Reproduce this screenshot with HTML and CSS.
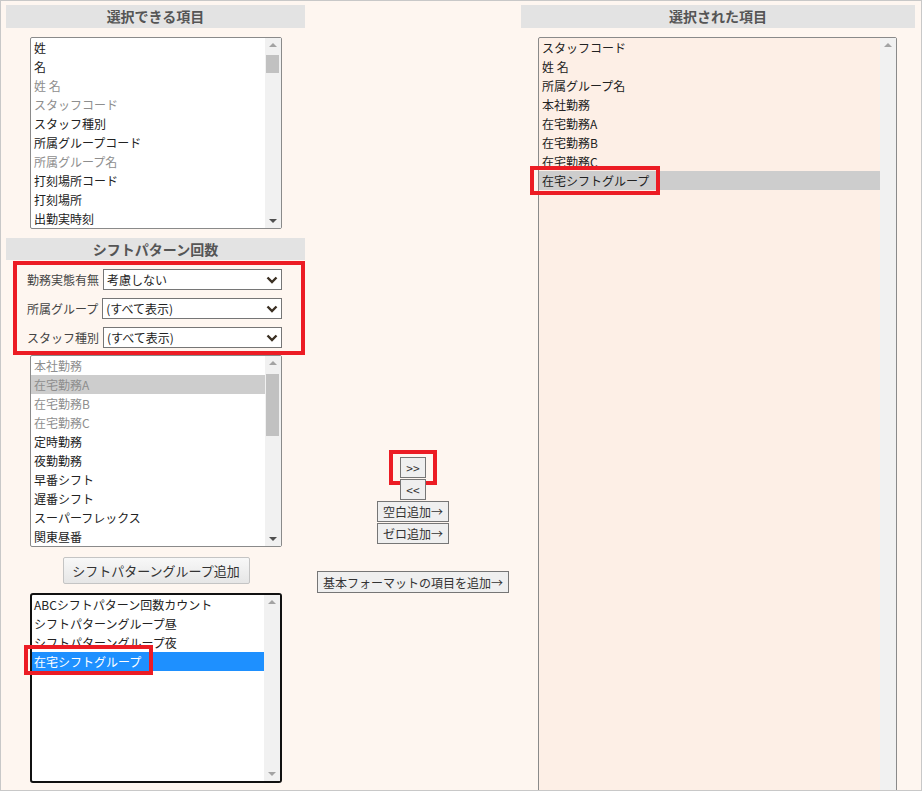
FILE: index.html
```html
<!DOCTYPE html>
<html lang="ja">
<head>
    <meta charset="UTF-8">
    <title>出力項目設定</title>
    <link rel="stylesheet" href="styles.css">
</head>
<body>
    <div class="page">
        <!-- left column -->
        <div class="col-left">
            <div class="section-title">選択できる項目</div>
            <div class="listbox list-items">
                <div class="options">
                    <div class="option">姓</div>
                    <div class="option">名</div>
                    <div class="option disabled">姓 名</div>
                    <div class="option disabled">スタッフコード</div>
                    <div class="option">スタッフ種別</div>
                    <div class="option">所属グループコード</div>
                    <div class="option disabled">所属グループ名</div>
                    <div class="option">打刻場所コード</div>
                    <div class="option">打刻場所</div>
                    <div class="option">出勤実時刻</div>
                </div>
                <div class="scrollbar">
                    <span class="arrow up"></span>
                    <span class="thumb thumb-1"></span>
                    <span class="arrow down active"></span>
                </div>
            </div>

            <div class="section-title second">シフトパターン回数</div>
            <div class="filters">
                <div class="filter-row">
                    <label>勤務実態有無</label>
                    <div class="select">
                        <select><option>考慮しない</option></select>
                        <svg width="12" height="8" viewBox="0 0 12 8"><polyline points="1.5,1.5 6,6 10.5,1.5" fill="none" stroke="#3b3023" stroke-width="2.4"/></svg>
                    </div>
                </div>
                <div class="filter-row">
                    <label>所属グループ</label>
                    <div class="select">
                        <select><option>(すべて表示)</option></select>
                        <svg width="12" height="8" viewBox="0 0 12 8"><polyline points="1.5,1.5 6,6 10.5,1.5" fill="none" stroke="#3b3023" stroke-width="2.4"/></svg>
                    </div>
                </div>
                <div class="filter-row">
                    <label>スタッフ種別</label>
                    <div class="select">
                        <select><option>(すべて表示)</option></select>
                        <svg width="12" height="8" viewBox="0 0 12 8"><polyline points="1.5,1.5 6,6 10.5,1.5" fill="none" stroke="#3b3023" stroke-width="2.4"/></svg>
                    </div>
                </div>
            </div>
            <div class="listbox list-patterns">
                <div class="options">
                    <div class="option disabled">本社勤務</div>
                    <div class="option disabled selected-gray">在宅勤務A</div>
                    <div class="option disabled">在宅勤務B</div>
                    <div class="option disabled">在宅勤務C</div>
                    <div class="option">定時勤務</div>
                    <div class="option">夜勤勤務</div>
                    <div class="option">早番シフト</div>
                    <div class="option">遅番シフト</div>
                    <div class="option">スーパーフレックス</div>
                    <div class="option">関東昼番</div>
                </div>
                <div class="scrollbar">
                    <span class="arrow up"></span>
                    <span class="thumb thumb-2"></span>
                    <span class="arrow down active"></span>
                </div>
            </div>
            <div class="add-group-wrap">
                <button class="btn-add-group">シフトパターングループ追加</button>
            </div>
            <div class="listbox list-groups">
                <div class="options">
                    <div class="option">ABCシフトパターン回数カウント</div>
                    <div class="option">シフトパターングループ昼</div>
                    <div class="option">シフトパターングループ夜</div>
                    <div class="option selected-blue"><span class="mark mark-group"></span>在宅シフトグループ</div>
                </div>
                <div class="scrollbar">
                    <span class="arrow up"></span>
                    <span class="arrow down"></span>
                </div>
            </div>
        </div>

        <!-- middle column -->
        <div class="col-middle">
            <div class="move-buttons">
                <button class="btn-small marked">&gt;&gt;<span class="mark mark-move"></span></button>
                <button class="btn-small">&lt;&lt;</button>
                <button class="btn-small">空白追加→</button>
                <button class="btn-small">ゼロ追加→</button>
            </div>
            <button class="btn-small btn-format">基本フォーマットの項目を追加→</button>
        </div>

        <!-- right column -->
        <div class="col-right">
            <div class="section-title">選択された項目</div>
            <div class="listbox list-selected">
                <div class="options">
                    <div class="option">スタッフコード</div>
                    <div class="option">姓 名</div>
                    <div class="option">所属グループ名</div>
                    <div class="option">本社勤務</div>
                    <div class="option">在宅勤務A</div>
                    <div class="option">在宅勤務B</div>
                    <div class="option">在宅勤務C</div>
                    <div class="option selected-gray"><span class="mark mark-selected"></span>在宅シフトグループ</div>
                </div>
                <div class="scrollbar">
                    <span class="arrow up"></span>
                </div>
            </div>
        </div>
    </div>
</body>
</html>
```

FILE: styles.css
```css
body {
    margin: 0;
    font-family: "Noto Sans CJK JP", "Noto Sans", sans-serif;
    font-size: 12px;
    color: #222;
}

.page {
    display: flex;
    width: 920px;
    height: 789px;
    border: 1px solid #c8c8c8;
    background-color: #fef6f0;
    overflow: hidden;
}

.col-left {
    width: 299px;
    margin-left: 5px;
    flex-shrink: 0;
}

.col-middle {
    width: 216px;
    flex-shrink: 0;
    display: flex;
    flex-direction: column;
    align-items: center;
}

.col-right {
    width: 394px;
    flex-shrink: 0;
}

.section-title {
    margin-top: 4px;
    height: 23px;
    line-height: 23px;
    background-color: #e3e3e3;
    color: #555;
    font-size: 14px;
    font-weight: bold;
    text-align: center;
}

.section-title.second {
    margin-top: 9px;
    height: 22px;
    line-height: 22px;
}

/* list boxes */
.listbox {
    position: relative;
    display: flex;
    box-sizing: border-box;
    border: 1px solid #8a8a8a;
    border-radius: 2px;
    background-color: #fff;
}

.listbox .options {
    flex: 1;
    min-width: 0;
}

.option {
    position: relative;
    height: 19px;
    line-height: 19px;
    padding-left: 3px;
    white-space: nowrap;
}

.option.disabled {
    color: #8e8e8e;
}

.option.selected-gray {
    background-color: #cdcdcd;
}

.option.selected-blue {
    background-color: #1e90ff;
    color: #fff;
}

.scrollbar {
    position: relative;
    width: 16px;
    background-color: #f1f1f1;
}

.arrow {
    position: absolute;
    left: 4px;
    width: 0;
    height: 0;
    border-left: 4px solid transparent;
    border-right: 4px solid transparent;
}

.arrow.up {
    top: 5px;
    border-bottom: 4px solid #a3a3a3;
}

.arrow.down {
    bottom: 5px;
    border-top: 4px solid #a3a3a3;
}

.arrow.down.active {
    border-top-color: #505050;
}

.thumb {
    position: absolute;
    left: 1px;
    width: 13px;
    background-color: #c1c1c1;
}

.thumb-1 {
    top: 17px;
    height: 18px;
}

.thumb-2 {
    top: 18px;
    height: 62px;
}

.list-items {
    margin: 9px 0 0 24px;
    width: 252px;
    height: 192px;
}

.list-patterns {
    margin: 0 0 0 24px;
    width: 252px;
    height: 192px;
}

.list-groups {
    margin: 9px 0 0 24px;
    width: 252px;
    height: 190px;
    border: 2px solid #111;
    border-radius: 3px;
}

.list-groups .option {
    padding-left: 2px;
}

.list-selected {
    margin: 9px 0 0 17px;
    width: 359px;
    height: 800px;
    background-color: #fdefe6;
}

/* filters in red frame */
.filters {
    position: relative;
    z-index: 1;
    margin: 1px 0 0 7px;
    width: 292px;
    box-sizing: border-box;
    border: 4px solid #ec1c24;
    padding: 4px 19px 3px 10px;
    display: flex;
    flex-direction: column;
    gap: 8px;
}

.filter-row {
    display: flex;
    align-items: center;
    gap: 4px;
    color: #444;
}

.filter-row label {
    white-space: nowrap;
}

.select {
    position: relative;
    flex: 1;
}

.select select {
    appearance: none;
    width: 100%;
    height: 21px;
    margin: 0;
    padding: 0 0 0 3px;
    border: 1px solid #767676;
    border-radius: 0;
    background-color: #fff;
    font-family: inherit;
    font-size: 12px;
    color: #222;
}

.select svg {
    position: absolute;
    right: 4px;
    top: 7px;
    pointer-events: none;
}

/* buttons */
.add-group-wrap {
    width: 252px;
    margin: 10px 0 0 24px;
    display: flex;
    justify-content: center;
}

.btn-add-group {
    height: 27px;
    width: 187px;
    padding: 0;
    border: 1px solid #c4c4c4;
    border-radius: 2px;
    background: linear-gradient(#f8f8f8, #e6e6e6);
    font-family: inherit;
    font-size: 13px;
    color: #333;
}

.move-buttons {
    margin-top: 456px;
    display: flex;
    flex-direction: column;
    align-items: center;
    gap: 1px;
}

.btn-small {
    position: relative;
    height: 21px;
    margin: 0;
    padding: 0 5px;
    border: 1px solid #767676;
    border-radius: 0;
    background-color: #efefef;
    font-family: inherit;
    font-size: 12px;
    line-height: 19px;
    color: #333;
}

.btn-format {
    margin-top: 27px;
    height: 22px;
}

/* red annotation frames */
.mark {
    position: absolute;
    border: 4px solid #ec1c24;
    pointer-events: none;
}

.mark-move {
    left: -12px;
    right: -12px;
    top: -8px;
    bottom: -8px;
}

.mark-group {
    left: -8px;
    top: -7px;
    width: 121px;
    height: 22px;
}

.mark-selected {
    left: -9px;
    top: -5px;
    width: 122px;
    height: 21px;
}
```
